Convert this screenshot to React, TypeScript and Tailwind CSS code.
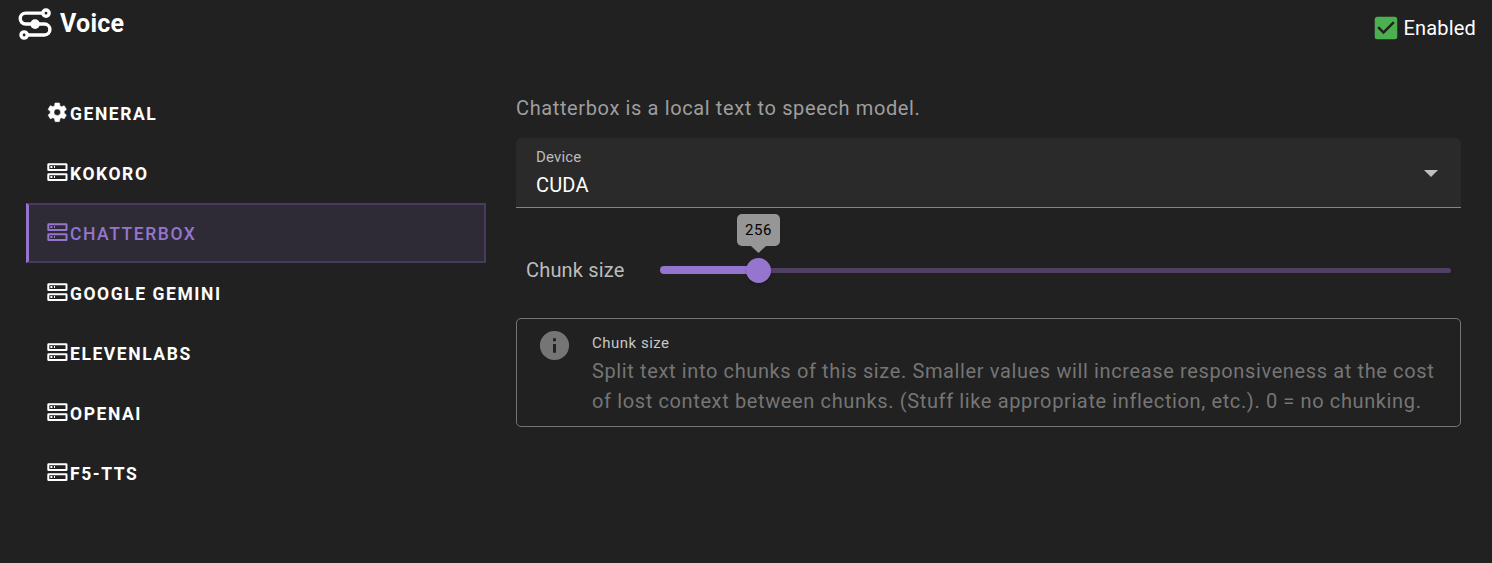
import React from "react";

const COG =
  "M12,15.5A3.5,3.5 0 0,1 8.5,12A3.5,3.5 0 0,1 12,8.5A3.5,3.5 0 0,1 15.5,12A3.5,3.5 0 0,1 12,15.5M19.43,12.97C19.47,12.65 19.5,12.33 19.5,12C19.5,11.67 19.47,11.34 19.43,11L21.54,9.37C21.73,9.22 21.78,8.95 21.66,8.73L19.66,5.27C19.54,5.05 19.27,4.96 19.05,5.05L16.56,6.05C16.04,5.66 15.5,5.32 14.87,5.07L14.5,2.42C14.46,2.18 14.25,2 14,2H10C9.75,2 9.54,2.18 9.5,2.42L9.13,5.07C8.5,5.32 7.96,5.66 7.44,6.05L4.95,5.05C4.73,4.96 4.46,5.05 4.34,5.27L2.34,8.73C2.21,8.95 2.27,9.22 2.46,9.37L4.57,11C4.53,11.34 4.5,11.67 4.5,12C4.5,12.33 4.53,12.65 4.57,12.97L2.46,14.63C2.27,14.78 2.21,15.05 2.34,15.27L4.34,18.73C4.46,18.95 4.73,19.03 4.95,18.95L7.44,17.94C7.96,18.34 8.5,18.68 9.13,18.93L9.5,21.58C9.54,21.82 9.75,22 10,22H14C14.25,22 14.46,21.82 14.5,21.58L14.87,18.93C15.5,18.67 16.04,18.34 16.56,17.94L19.05,18.95C19.27,19.03 19.54,18.95 19.66,18.73L21.66,15.27C21.78,15.05 21.73,14.78 21.54,14.63L19.43,12.97Z";

function RouteIcon() {
  return (
    <svg viewBox="0 0 24 24" className="size-[37.5px] shrink-0" fill="none" stroke="currentColor" strokeWidth="2.2">
      <path d="M17 5.2H6.2a3.5 3.5 0 0 0 0 7h12a3.5 3.5 0 0 1 0 7H7" />
      <circle cx="19.2" cy="5.2" r="2" />
      <circle cx="5.2" cy="19.2" r="2" />
      <circle cx="12.2" cy="12.2" r="3.1" fill="currentColor" stroke="none" />
    </svg>
  );
}

function CogIcon() {
  return (
    <svg viewBox="0 0 24 24" className="size-[22.5px] shrink-0" fill="currentColor" stroke="currentColor" strokeWidth="0.5">
      <path d={COG} />
    </svg>
  );
}

function ServerIcon() {
  return (
    <svg viewBox="0 0 22 22" className="size-[22px] shrink-0" fill="none" stroke="currentColor" strokeWidth="2">
      <rect x="2.3" y="3.2" width="18.2" height="5.9" rx="0.4" />
      <rect x="2.3" y="13.2" width="18.2" height="5.9" rx="0.4" />
      <path d="M4.4 6.1h2M8 6.1h1M4.4 16.1h2M8 16.1h1" />
    </svg>
  );
}

const tabs = ["General", "Kokoro", "Chatterbox", "Google Gemini", "ElevenLabs", "OpenAI", "F5-TTS"];
const active = "Chatterbox";

export default function App() {
  return (
    <div className="h-[563px] w-[1492px] overflow-hidden bg-[#212121] font-['Roboto',sans-serif] text-white">
      <header className="flex h-[83px] items-start justify-between pl-4 pr-4">
        <div className="flex items-start pt-[5px]">
          <RouteIcon />
          <h1 className="ml-[6.5px] text-[25px] leading-[37px] font-bold tracking-[0.25px]">Voice</h1>
        </div>
        <label className="flex items-center pt-[13px]">
          <svg viewBox="0 0 24 24" className="size-[30px]" fill="#4caf50">
            <path d="M10,17L5,12L6.41,10.58L10,14.17L17.59,6.58L19,8M19,3H5C3.89,3 3,3.89 3,5V19A2,2 0 0,0 5,21H19A2,2 0 0,0 21,19V5C21,3.89 20.1,3 19,3Z" />
          </svg>
          <span className="ml-0.5 text-[20px] leading-[30px] tracking-[0.18px]">Enabled</span>
        </label>
      </header>
      <main className="flex items-start">
        <nav className="ml-[26px] flex w-[460px] flex-col">
          {tabs.map((t) => (
            <button
              key={t}
              className={
                "flex h-[60px] items-center text-[17.5px] tracking-[1.5625px] uppercase " +
                (t === active
                  ? "border-2 border-l-3 border-[#473b5f] border-l-[#9575cd] bg-[#2f2b36] pl-[17px] font-medium text-[#9575cd]"
                  : "pl-5 font-bold text-white")
              }
            >
              <span className="flex w-6 -translate-y-px justify-start">
                {t === "General" ? <CogIcon /> : <ServerIcon />}
              </span>
              <span className="pt-0.5">{t}</span>
            </button>
          ))}
        </nav>
        <section className="ml-[30px] w-[945px] pt-2.5">
          <p className="text-[20px] leading-[30px] tracking-[0.625px] text-[#9e9e9e]">
            Chatterbox is a local text to speech model.
          </p>
          <div className="mt-[15px] flex h-[70px] items-center justify-between rounded-t-[5px] border-b border-[#848484] bg-[#2a2a2a] pr-5 pl-5">
            <div className="pt-px">
              <div className="text-[15px] leading-5 tracking-[0.14px] text-[#bcbcbc]">Device</div>
              <div className="mt-[3px] text-[20px] leading-[30px] tracking-[0.18px]">CUDA</div>
            </div>
            <svg viewBox="0 0 20 10" className="mt-px h-[10px] w-5" fill="#c0c0c0">
              <path d="M3 2h14l-7 7z" />
            </svg>
          </div>
          <div className="flex h-[110px] items-center pt-[14px] pr-2.5 pl-2.5">
            <span className="w-[134px] text-[20px] leading-[30px] tracking-[0.18px] text-[#bcbcbc]">Chunk size</span>
            <div className="relative flex h-[25px] flex-1 items-center">
              <div className="h-2 w-[98px] rounded-l-full bg-[#9575cd]" />
              <div className="h-[5px] flex-1 rounded-r-full bg-[#4f4064]" />
              <div className="absolute top-0 left-[86px] size-[25px] rounded-full bg-[#9575cd] shadow-[0_2px_3px_rgba(0,0,0,0.2)]" />
              <div className="absolute -top-[44px] left-[77px] flex h-8 w-[43px] items-center justify-center rounded-[5px] bg-[#969696] pt-px text-[15px] tracking-[0.5px] text-black">
                256
              </div>
              <svg viewBox="0 0 15 8" className="absolute -top-[12px] left-[91px] h-2 w-[15px]" fill="#969696">
                <path d="M0 0h15L7.5 7z" />
              </svg>
            </div>
          </div>
          <div className="flex h-[109px] items-start rounded-[5px] border border-[#757575] pt-[9px] pl-5">
            <svg viewBox="0 0 24 24" className="size-[35px] shrink-0" fill="#757575">
              <path d="M13,9H11V7H13M13,17H11V11H13M12,2A10,10 0 0,0 2,12A10,10 0 0,0 12,22A10,10 0 0,0 22,12A10,10 0 0,0 12,2Z" />
            </svg>
            <div className="ml-5 pt-[3px]">
              <div className="text-[15px] leading-[25px] tracking-[0.5px] text-[#c8c8c8]">Chunk size</div>
              <p className="text-[20px] leading-[30px] tracking-[0.625px] whitespace-nowrap text-[#757575]">
                Split text into chunks of this size. Smaller values will increase responsiveness at the cost
                <br />
                of lost context between chunks. (Stuff like appropriate inflection, etc.). 0 = no chunking.
              </p>
            </div>
          </div>
        </section>
      </main>
    </div>
  );
}
